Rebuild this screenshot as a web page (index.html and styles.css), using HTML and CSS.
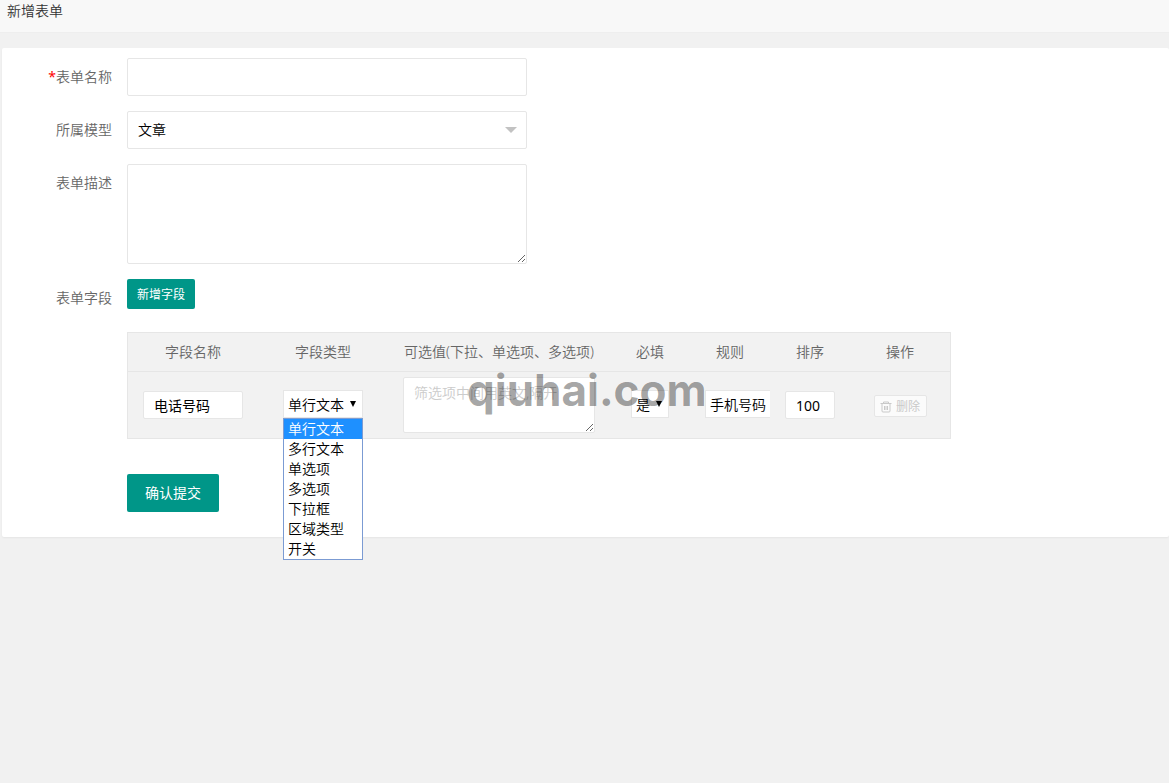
FILE: index.html
```html
<!DOCTYPE html>
<html lang="zh-CN">
<head>
    <meta charset="UTF-8">
    <meta name="viewport" content="width=device-width, initial-scale=1.0">
    <title>新增表单</title>
    <link rel="stylesheet" href="styles.css">
</head>
<body>

    <header class="page-header">
        <h1>新增表单</h1>
    </header>

    <main class="card">
        <form class="form">
            <div class="form-item">
                <label class="form-label" for="formName"><span class="required">*</span>表单名称</label>
                <input type="text" id="formName" class="input" />
            </div>

            <div class="form-item">
                <label class="form-label" for="formModel">所属模型</label>
                <div class="select-box model-select">
                    <select id="formModel" class="input">
                        <option>文章</option>
                    </select>
                </div>
            </div>

            <div class="form-item">
                <label class="form-label" for="formDesc">表单描述</label>
                <textarea id="formDesc" class="input textarea"></textarea>
            </div>

            <div class="form-item">
                <span class="form-label">表单字段</span>
                <div class="form-block">
                    <button type="button" class="btn btn-sm">新增字段</button>

                    <!-- Field table -->
                    <div class="table-box">
                        <table class="table">
                            <colgroup>
                                <col class="col-wide">
                                <col class="col-wide">
                                <col class="col-options">
                                <col class="col-small">
                                <col class="col-small">
                                <col class="col-small">
                                <col class="col-action">
                            </colgroup>
                            <thead>
                                <tr>
                                    <th>字段名称</th>
                                    <th>字段类型</th>
                                    <th class="nowrap">可选值(下拉、单选项、多选项)</th>
                                    <th>必填</th>
                                    <th>规则</th>
                                    <th>排序</th>
                                    <th>操作</th>
                                </tr>
                            </thead>
                            <tbody>
                                <tr>
                                    <td><input type="text" class="cell-input" value="电话号码" aria-label="字段名称" /></td>
                                    <td>
                                        <div class="select-box cell-select type-select">
                                            <select aria-label="字段类型">
                                                <option>单行文本</option>
                                                <option>多行文本</option>
                                                <option>单选项</option>
                                                <option>多选项</option>
                                                <option>下拉框</option>
                                                <option>区域类型</option>
                                                <option>开关</option>
                                            </select>
                                            <ul class="dropdown" role="listbox" aria-label="字段类型">
                                                <li role="option" aria-selected="true" class="active">单行文本</li>
                                                <li role="option">多行文本</li>
                                                <li role="option">单选项</li>
                                                <li role="option">多选项</li>
                                                <li role="option">下拉框</li>
                                                <li role="option">区域类型</li>
                                                <li role="option">开关</li>
                                            </ul>
                                        </div>
                                    </td>
                                    <td><textarea class="cell-textarea" placeholder="筛选项中间用英文,隔开" aria-label="可选值"></textarea></td>
                                    <td>
                                        <div class="select-box cell-select need-select">
                                            <select aria-label="必填">
                                                <option>是</option>
                                                <option>否</option>
                                            </select>
                                        </div>
                                    </td>
                                    <td class="rule-cell">
                                        <div class="select-box cell-select rule-select">
                                            <select aria-label="规则">
                                                <option>手机号码</option>
                                            </select>
                                        </div>
                                    </td>
                                    <td><input type="text" class="cell-input" value="100" aria-label="排序" /></td>
                                    <td class="action-cell">
                                        <button type="button" class="btn-delete" disabled>
                                            <svg width="12" height="12" viewBox="0 0 12 12" fill="none" stroke="currentColor" aria-hidden="true">
                                                <path d="M0.5 2.5h11M3.5 2.5v-1.5h5v1.5"/>
                                                <path d="M2 3v7q0 1 1 1h6q1 0 1-1v-7M4.5 5v4M6 5v4M7.5 5v4"/>
                                            </svg>
                                            删除
                                        </button>
                                    </td>
                                </tr>
                            </tbody>
                        </table>
                        <span class="watermark">qiuhai.com</span>
                    </div>
                </div>
            </div>

            <div class="form-item form-submit">
                <button type="button" class="btn">确认提交</button>
            </div>
        </form>
    </main>

</body>
</html>
```

FILE: styles.css
```css
* {
    box-sizing: border-box;
}
body {
    margin: 0;
    min-height: 100vh;
    font: 14px/20px "Noto Sans", "Noto Sans CJK SC", sans-serif;
    font-weight: 350;
    background-color: #f1f1f1;
    color: #666;
}
input, select, textarea, button {
    margin: 0;
    font: inherit;
    color: #000;
    background-color: #fff;
    border: 1px solid #e6e6e6;
    border-radius: 2px;
    outline: none;
}
.page-header {
    height: 33px;
    padding: 0 7px;
    background-color: #f8f8f8;
    border-bottom: 1px solid #eee;
}
.page-header h1 {
    margin: 0;
    font-size: 14px;
    line-height: 22px;
    font-weight: inherit;
    color: #333;
}

/* Form */
.card {
    margin: 15px 0 0 2px;
    padding: 10px 0 25px;
    background-color: #fff;
    border-radius: 2px;
    box-shadow: 0 1px 2px rgba(0, 0, 0, 0.05);
}
.form {
    display: flex;
    flex-direction: column;
    gap: 15px;
}
.form-item {
    display: flex;
    align-items: flex-start;
}
.form-label {
    flex: 0 0 125px;
    padding: 9px 15px 9px 0;
    text-align: right;
}
.required {
    font-weight: 400;
    color: red;
}
.input {
    width: 400px;
    height: 38px;
    padding: 0 10px;
}
.textarea {
    height: 100px;
    padding: 6px 10px;
    resize: vertical;
}
.form-submit {
    padding: 20px 0 0 125px;
}

/* Selects */
.select-box {
    position: relative;
    display: block;
}
.select-box select {
    display: block;
    appearance: none;
}
.select-box::after {
    content: "";
    position: absolute;
    pointer-events: none;
}
.model-select::after {
    top: 16px;
    right: 10px;
    border: 6px solid transparent;
    border-top-color: #c2c2c2;
    border-bottom: 0;
}
.cell-select {
    margin: 0 auto 2px;
}
.cell-select select {
    width: 100%;
    height: 28px;
    padding: 2px 4px 0;
    border-radius: 0;
}
.cell-select::after {
    top: 11px;
    right: 7px;
    border: 3px solid transparent;
    border-top: 6px solid #000;
    border-bottom: 0;
}
.type-select {
    width: 80px;
}
.need-select {
    width: 38px;
}
.rule-select {
    width: 80px;
}
.dropdown {
    position: absolute;
    top: 28px;
    left: 0;
    z-index: 2;
    width: 100%;
    margin: 0;
    padding: 0;
    list-style-type: none;
    text-align: left;
    color: #000;
    background-color: #fff;
    border: 1px solid #7b9bd3;
}
.dropdown li {
    padding: 0 4px;
}
.dropdown .active {
    color: #fff;
    background-color: #1e90ff;
}

/* Buttons */
.btn {
    display: block;
    height: 38px;
    padding: 0 18px;
    border: none;
    font-weight: 400;
    color: #fff;
    background-color: #009688;
    cursor: pointer;
}
.btn-sm {
    height: 30px;
    padding: 2px 10px 0;
    font-size: 12px;
}
.btn-delete {
    display: flex;
    align-items: center;
    justify-content: center;
    gap: 4px;
    width: 53px;
    height: 22px;
    margin: 0 auto;
    padding: 2px 0 0;
    font-size: 12px;
    font-weight: 400;
    color: #c9c9c9;
    background-color: #fbfbfb;
}

/* Table */
.table-box {
    position: relative;
    margin-top: 23px;
}
.table {
    width: 824px;
    table-layout: fixed;
    border-spacing: 0;
    background-color: #f2f2f2;
    border: 1px solid #e6e6e6;
}
.col-wide {
    width: 130px;
}
.col-options {
    width: 222px;
}
.col-small {
    width: 80px;
}
.col-action {
    width: 100px;
}
.table th {
    padding: 9px 15px;
    font-weight: inherit;
    border-bottom: 1px solid #e6e6e6;
}
.table td {
    padding: 5px 15px;
    text-align: center;
}
.table .nowrap {
    white-space: nowrap;
}
.table .rule-cell {
    padding-right: 0;
    overflow: hidden;
}
.table .action-cell {
    padding-top: 7px;
}
.cell-input {
    display: block;
    width: 100%;
    height: 28px;
    padding: 0 10px;
    font-weight: 400;
}
.cell-textarea {
    display: block;
    width: 100%;
    height: 56px;
    padding: 5px 10px;
    resize: vertical;
}
.cell-textarea::placeholder {
    color: #ccc;
}
.watermark {
    position: absolute;
    top: 34px;
    left: 340px;
    font: 700 44px/48px Inter, sans-serif;
    color: rgba(0, 0, 0, 0.37);
    pointer-events: none;
}
```
